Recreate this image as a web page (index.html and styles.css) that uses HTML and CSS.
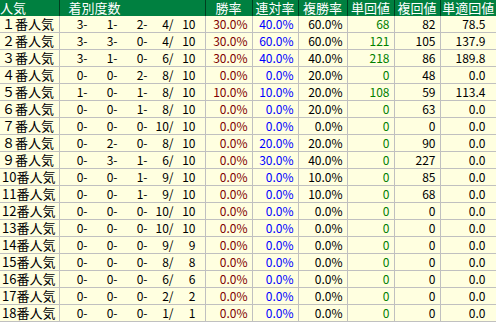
FILE: index.html
```html
<!DOCTYPE html>
<html lang="ja">
<head>
<meta charset="utf-8">
<link rel="stylesheet" href="styles.css">
</head>
<body>
<table class="stats">
  <colgroup>
    <col class="c-pop"><col class="c-rec"><col class="c-rate"><col class="c-rate2"><col class="c-rate3"><col class="c-val"><col class="c-val2"><col class="c-val3">
  </colgroup>
  <thead>
    <tr>
      <th class="h-pop">人気</th>
      <th class="h-rec">着別度数</th>
      <th>勝率</th>
      <th>連対率</th>
      <th>複勝率</th>
      <th>単回値</th>
      <th>複回値</th>
      <th>単適回値</th>
    </tr>
  </thead>
  <tbody>
    <tr><td class="pop">１番人気</td><td class="rec"><span class="a">3-</span><span class="b">1-</span><span class="b">2-</span><span class="c">4/</span><span class="d">10</span></td><td class="red">30.0%</td><td class="blue">40.0%</td><td>60.0%</td><td class="green">68</td><td>82</td><td class="last">78.5</td></tr>
    <tr><td class="pop">２番人気</td><td class="rec"><span class="a">3-</span><span class="b">3-</span><span class="b">0-</span><span class="c">4/</span><span class="d">10</span></td><td class="red">30.0%</td><td class="blue">60.0%</td><td>60.0%</td><td class="green">121</td><td>105</td><td class="last">137.9</td></tr>
    <tr><td class="pop">３番人気</td><td class="rec"><span class="a">3-</span><span class="b">1-</span><span class="b">0-</span><span class="c">6/</span><span class="d">10</span></td><td class="red">30.0%</td><td class="blue">40.0%</td><td>40.0%</td><td class="green">218</td><td>86</td><td class="last">189.8</td></tr>
    <tr><td class="pop">４番人気</td><td class="rec"><span class="a">0-</span><span class="b">0-</span><span class="b">2-</span><span class="c">8/</span><span class="d">10</span></td><td class="red">0.0%</td><td class="blue">0.0%</td><td>20.0%</td><td class="green">0</td><td>48</td><td class="last">0.0</td></tr>
    <tr><td class="pop">５番人気</td><td class="rec"><span class="a">1-</span><span class="b">0-</span><span class="b">1-</span><span class="c">8/</span><span class="d">10</span></td><td class="red">10.0%</td><td class="blue">10.0%</td><td>20.0%</td><td class="green">108</td><td>59</td><td class="last">113.4</td></tr>
    <tr><td class="pop">６番人気</td><td class="rec"><span class="a">0-</span><span class="b">0-</span><span class="b">1-</span><span class="c">8/</span><span class="d">10</span></td><td class="red">0.0%</td><td class="blue">0.0%</td><td>20.0%</td><td class="green">0</td><td>63</td><td class="last">0.0</td></tr>
    <tr><td class="pop">７番人気</td><td class="rec"><span class="a">0-</span><span class="b">0-</span><span class="b">0-</span><span class="c">10/</span><span class="d">10</span></td><td class="red">0.0%</td><td class="blue">0.0%</td><td>0.0%</td><td class="green">0</td><td>0</td><td class="last">0.0</td></tr>
    <tr><td class="pop">８番人気</td><td class="rec"><span class="a">0-</span><span class="b">2-</span><span class="b">0-</span><span class="c">8/</span><span class="d">10</span></td><td class="red">0.0%</td><td class="blue">20.0%</td><td>20.0%</td><td class="green">0</td><td>90</td><td class="last">0.0</td></tr>
    <tr><td class="pop">９番人気</td><td class="rec"><span class="a">0-</span><span class="b">3-</span><span class="b">1-</span><span class="c">6/</span><span class="d">10</span></td><td class="red">0.0%</td><td class="blue">30.0%</td><td>40.0%</td><td class="green">0</td><td>227</td><td class="last">0.0</td></tr>
    <tr><td class="pop">10番人気</td><td class="rec"><span class="a">0-</span><span class="b">0-</span><span class="b">1-</span><span class="c">9/</span><span class="d">10</span></td><td class="red">0.0%</td><td class="blue">0.0%</td><td>10.0%</td><td class="green">0</td><td>85</td><td class="last">0.0</td></tr>
    <tr><td class="pop">11番人気</td><td class="rec"><span class="a">0-</span><span class="b">0-</span><span class="b">1-</span><span class="c">9/</span><span class="d">10</span></td><td class="red">0.0%</td><td class="blue">0.0%</td><td>10.0%</td><td class="green">0</td><td>68</td><td class="last">0.0</td></tr>
    <tr><td class="pop">12番人気</td><td class="rec"><span class="a">0-</span><span class="b">0-</span><span class="b">0-</span><span class="c">10/</span><span class="d">10</span></td><td class="red">0.0%</td><td class="blue">0.0%</td><td>0.0%</td><td class="green">0</td><td>0</td><td class="last">0.0</td></tr>
    <tr><td class="pop">13番人気</td><td class="rec"><span class="a">0-</span><span class="b">0-</span><span class="b">0-</span><span class="c">10/</span><span class="d">10</span></td><td class="red">0.0%</td><td class="blue">0.0%</td><td>0.0%</td><td class="green">0</td><td>0</td><td class="last">0.0</td></tr>
    <tr><td class="pop">14番人気</td><td class="rec"><span class="a">0-</span><span class="b">0-</span><span class="b">0-</span><span class="c">9/</span><span class="d">9</span></td><td class="red">0.0%</td><td class="blue">0.0%</td><td>0.0%</td><td class="green">0</td><td>0</td><td class="last">0.0</td></tr>
    <tr><td class="pop">15番人気</td><td class="rec"><span class="a">0-</span><span class="b">0-</span><span class="b">0-</span><span class="c">8/</span><span class="d">8</span></td><td class="red">0.0%</td><td class="blue">0.0%</td><td>0.0%</td><td class="green">0</td><td>0</td><td class="last">0.0</td></tr>
    <tr><td class="pop">16番人気</td><td class="rec"><span class="a">0-</span><span class="b">0-</span><span class="b">0-</span><span class="c">6/</span><span class="d">6</span></td><td class="red">0.0%</td><td class="blue">0.0%</td><td>0.0%</td><td class="green">0</td><td>0</td><td class="last">0.0</td></tr>
    <tr><td class="pop">17番人気</td><td class="rec"><span class="a">0-</span><span class="b">0-</span><span class="b">0-</span><span class="c">2/</span><span class="d">2</span></td><td class="red">0.0%</td><td class="blue">0.0%</td><td>0.0%</td><td class="green">0</td><td>0</td><td class="last">0.0</td></tr>
    <tr><td class="pop">18番人気</td><td class="rec"><span class="a">0-</span><span class="b">0-</span><span class="b">0-</span><span class="c">1/</span><span class="d">1</span></td><td class="red">0.0%</td><td class="blue">0.0%</td><td>0.0%</td><td class="green">0</td><td>0</td><td class="last">0.0</td></tr>
  </tbody>
</table>
</body>
</html>
```

FILE: styles.css
```css
html, body {
  margin: 0;
  padding: 0;
  background: #ffffff;
}

.stats {
  border-collapse: collapse;
  table-layout: fixed;
  width: 496px;
  font-family: "Noto Sans CJK JP", "DejaVu Sans", sans-serif;
  font-size: 12px;
  color: #000000;
}

.c-pop { width: 59px; }
.c-rec { width: 146px; }
.c-rate { width: 47px; }
.c-rate2 { width: 46px; }
.c-rate3 { width: 49px; }
.c-val { width: 47px; }
.c-val2 { width: 46px; }
.c-val3 { width: 56px; }

.stats th {
  background: #008040;
  color: #ffffff;
  font-weight: normal;
  font-size: 13px;
  height: 16px;
  line-height: 16px;
  padding: 0;
  text-align: center;
  border-left: 1px solid #003f1f;
  white-space: nowrap;
}

.stats th:first-child { border-left: none; }

.stats th.h-pop {
  text-align: left;
  padding-left: 0;
}

.stats th.h-rec {
  text-align: left;
  padding-left: 9px;
}

.stats td {
  background: #ffffe0;
  height: 16px;
  line-height: 16px;
  padding: 0 4px 0 0;
  text-align: right;
  border: 1px solid #c0c0c0;
  border-top: none;
  white-space: nowrap;
}

.stats td:first-child { border-left: none; }

.stats td.pop {
  text-align: left;
  padding: 0 0 0 2px;
  font-size: 13px;
}

.stats td.rec {
  text-align: left;
  padding: 0;
}

.stats td.last {
  padding-right: 10px;
}

.rec span {
  display: inline-block;
  text-align: right;
}

.rec .a { width: 28px; }
.rec .b { width: 30px; }
.rec .c { width: 26px; }
.rec .d { width: 22px; }

.red { color: #800000; }
.blue { color: #0000ff; }
.green { color: #008000; }
```
